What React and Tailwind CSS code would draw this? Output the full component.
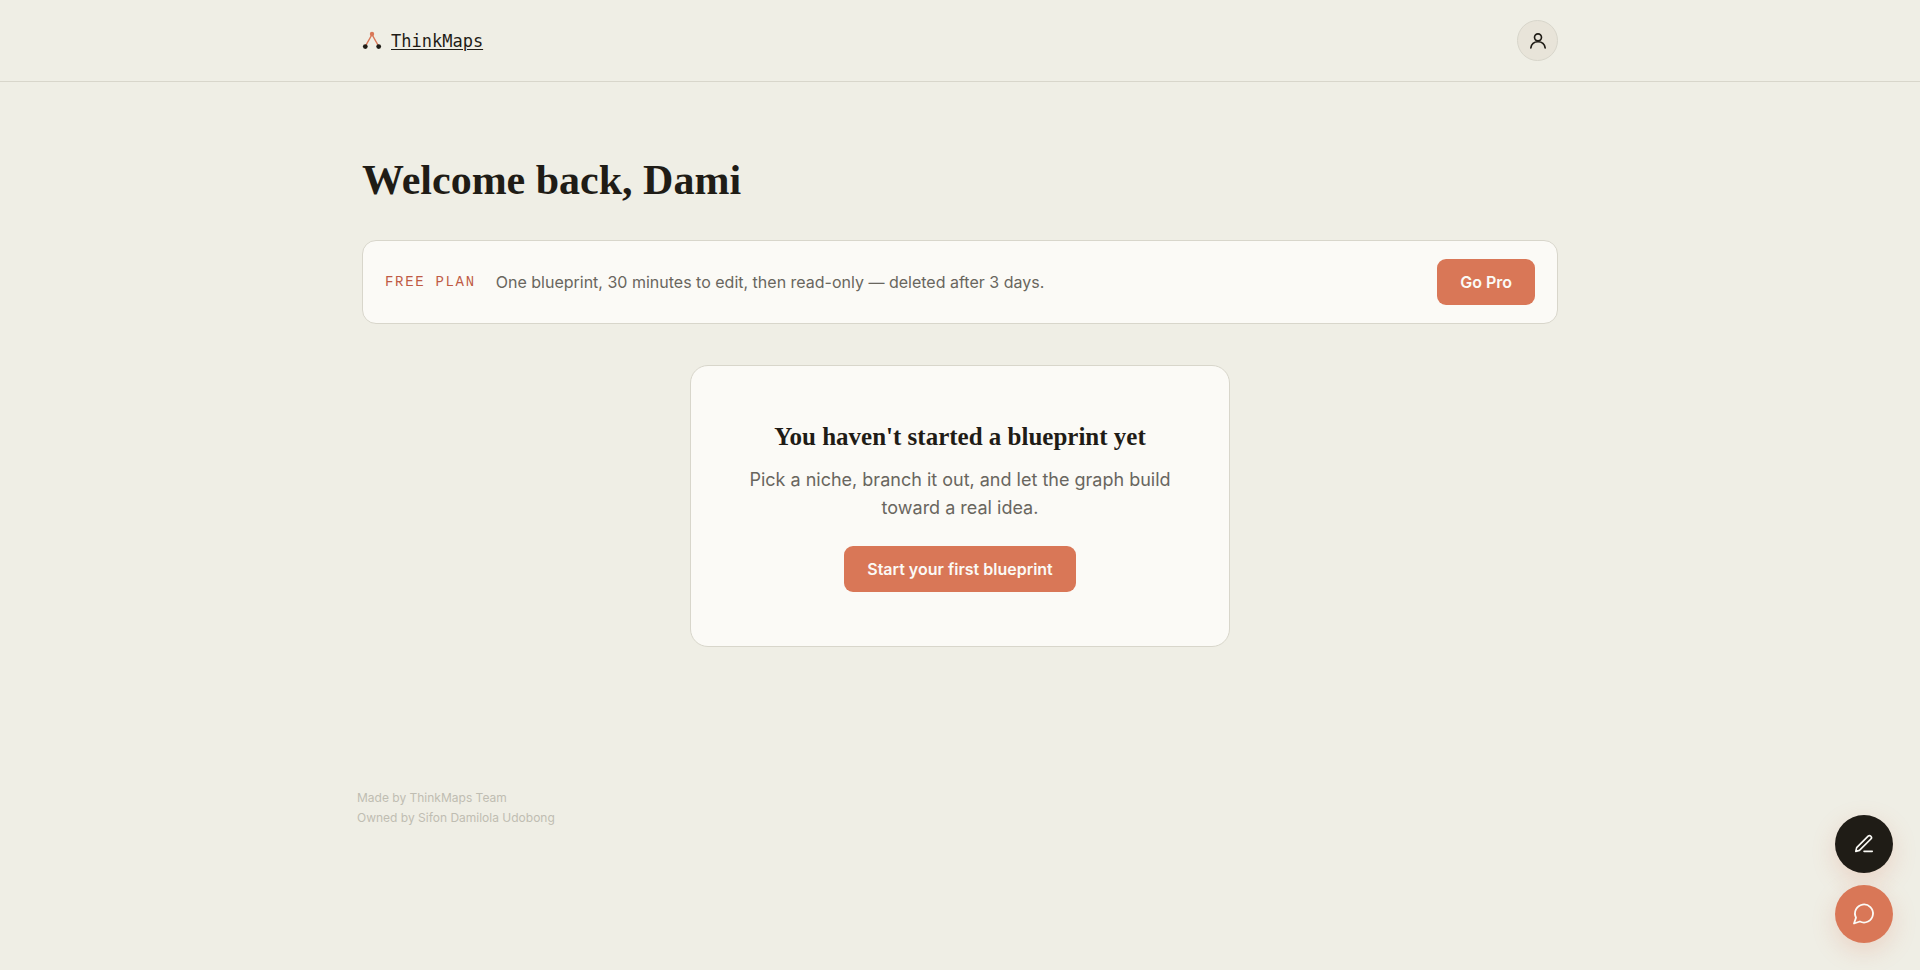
function LogoMark() {
  return (
    <svg width="21" height="22" viewBox="1 0 21 22" fill="none" aria-hidden="true">
      <path d="M11 4.5 4.5 16M11 4.5l6.5 11.5" stroke="#d97757" strokeWidth="1.5" />
      <circle cx="11" cy="4" r="2.2" fill="#d97757" />
      <circle cx="4.3" cy="16.6" r="2.4" fill="#1f1c16" />
      <circle cx="17.7" cy="16.6" r="2.4" fill="#1f1c16" />
    </svg>
  );
}

function Icon({ size, children }) {
  return (
    <svg
      width={size}
      height={size}
      viewBox="0 0 24 24"
      fill="none"
      stroke="currentColor"
      strokeWidth="1.8"
      strokeLinecap="round"
      strokeLinejoin="round"
      aria-hidden="true"
    >
      {children}
    </svg>
  );
}

function UserIcon() {
  return (
    <Icon size={22}>
      <circle cx="12" cy="8" r="3.8" />
      <path d="M4.2 19.6C4.8 15.4 8 12.8 12 12.8s7.2 2.6 7.8 6.8" />
    </Icon>
  );
}

function PenIcon() {
  return (
    <Icon size={22}>
      <path d="M12 20h9" />
      <path d="M16.5 3.5a2.12 2.12 0 0 1 3 3L7 19l-4 1 1-4Z" />
    </Icon>
  );
}

function ChatIcon() {
  return (
    <Icon size={24}>
      <path d="M7.9 19.5A9 9 0 1 0 4 15.6L2 21.5Z" />
    </Icon>
  );
}

function PrimaryButton({ children }) {
  return (
    <button
      type="button"
      className="h-[46px] shrink-0 rounded-[9px] bg-[#d97757] px-[23px] text-base font-semibold text-[#fbfaf6]"
    >
      {children}
    </button>
  );
}

function Header() {
  return (
    <header className="border-b border-[#d8d6cb]">
      <div className="mx-auto flex w-full max-w-[1244px] items-center justify-between px-6 py-5">
        <a
          href="#"
          className="flex items-center gap-2 font-['DejaVu_Sans_Mono',monospace] text-[17px] leading-6 underline underline-offset-2"
        >
          <LogoMark />
          ThinkMaps
        </a>
        <button
          type="button"
          aria-label="Account"
          className="flex size-[41px] items-center justify-center rounded-full border border-[#d8d6cb] bg-[#e8e4d9]"
        >
          <UserIcon />
        </button>
      </div>
    </header>
  );
}

export default function App() {
  return (
    <div className="min-h-screen bg-[#efeee5] font-['Inter',sans-serif] text-[#1f1c16]">
      <Header />
      <main className="mx-auto flex w-full max-w-[1244px] flex-col px-6 pt-[72px]">
        <h1 className="font-['Liberation_Serif',serif] text-[42px] leading-[52px] font-semibold">
          Welcome back, Dami
        </h1>

        <section className="mt-[34px] flex items-center gap-5 rounded-[14px] border border-[#d8d6cb] bg-[#fbfaf6] px-[22px] py-[18px]">
          <span className="font-['Liberation_Mono',monospace] text-sm tracking-[0.12em] text-[#bf5a45]">
            FREE PLAN
          </span>
          <p className="flex-1 text-base text-[#69665e]">
            One blueprint, 30 minutes to edit, then read-only — deleted after 3 days.
          </p>
          <PrimaryButton>Go Pro</PrimaryButton>
        </section>

        <section className="mx-auto mt-[41px] flex w-full max-w-[540px] flex-col items-center rounded-[18px] border border-[#d8d6cb] bg-[#fbfaf6] px-12 py-[54px] text-center">
          <h2 className="font-['Liberation_Serif',serif] text-[25px] leading-[34px] font-semibold">
            You haven't started a blueprint yet
          </h2>
          <p className="mt-3 mb-6 text-lg leading-7 text-[#69665e]">
            Pick a niche, branch it out, and let the graph build toward a real idea.
          </p>
          <PrimaryButton>Start your first blueprint</PrimaryButton>
        </section>
      </main>

      <footer className="mx-auto mt-[141px] w-full max-w-[1254px] px-6 text-xs leading-5 text-[#bfbdb2]">
        <p>Made by ThinkMaps Team</p>
        <p>Owned by Sifon Damilola Udobong</p>
      </footer>

      <div className="fixed right-[27px] bottom-[27px] flex flex-col gap-3 text-[#fbfaf6]">
        <button
          type="button"
          aria-label="Write a note"
          className="flex size-[58px] items-center justify-center rounded-full bg-[#1f1c16] shadow-[0_8px_24px_rgba(217,119,87,0.22)]"
        >
          <PenIcon />
        </button>
        <button
          type="button"
          aria-label="Open chat"
          className="flex size-[58px] items-center justify-center rounded-full bg-[#d97757] shadow-[0_8px_24px_rgba(217,119,87,0.22)]"
        >
          <ChatIcon />
        </button>
      </div>
    </div>
  );
}
